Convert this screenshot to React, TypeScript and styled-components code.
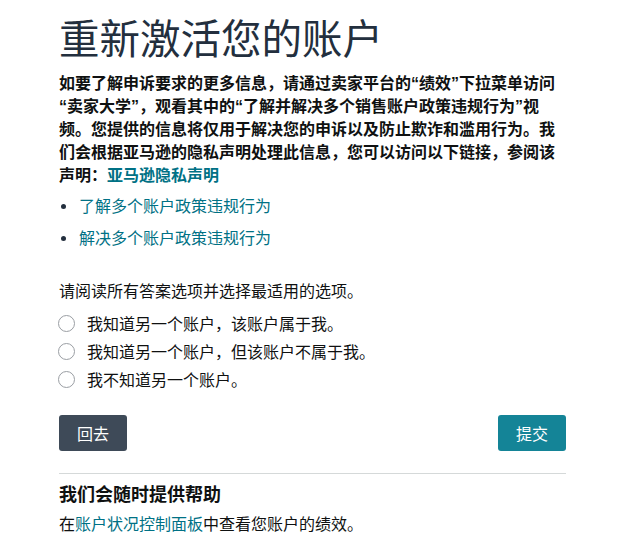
import React, { useState } from 'react'
import styled, { createGlobalStyle } from 'styled-components'

const GlobalStyle = createGlobalStyle`
  body {
    margin: 0;
    background: #ffffff;
    font-family: 'Liberation Sans', 'Noto Sans CJK SC', sans-serif;
    color: #0f1111;
  }
`

const Page = styled.div`
  width: 507px;
  padding: 16px 0 0 59px;
`

const Title = styled.h1`
  margin: 0 0 8px;
  font-size: 40.5px;
  line-height: 48px;
  font-weight: 400;
  color: #232f3e;
`

const Intro = styled.p`
  margin: 0;
  font-size: 16px;
  line-height: 23px;
  font-weight: 700;
`

const Link = styled.a<{ $bold?: boolean }>`
  color: #007185;
  text-decoration: none;
  font-weight: ${(p) => (p.$bold ? 700 : 400)};
  cursor: pointer;
`

const LinkList = styled.ul`
  margin: 8px 0 0;
  padding: 0;
  list-style: none;
  display: flex;
  flex-direction: column;
  gap: 9px;
  font-size: 16px;
  line-height: 23px;
`

const LinkItem = styled.li`
  display: flex;
  align-items: center;
  &::before {
    content: '';
    width: 5px;
    height: 5px;
    margin: 0 13px 0 2px;
    border-radius: 50%;
    background: #232f3e;
    flex: none;
  }
`

const Prompt = styled.p`
  margin: 30px 0 6px;
  font-size: 16px;
  line-height: 23px;
`

const Options = styled.div`
  display: flex;
  flex-direction: column;
`

const OptionRow = styled.label`
  display: flex;
  align-items: center;
  gap: 12px;
  height: 28px;
  font-size: 16px;
  cursor: pointer;
`

const RadioCircle = styled.span<{ $checked: boolean }>`
  width: 17px;
  height: 17px;
  margin-left: -1px;
  box-sizing: border-box;
  border-radius: 50%;
  border: 1px solid #9a9ea3;
  background: #ffffff;
  box-shadow: ${(p) => (p.$checked ? 'inset 0 0 0 4px #007185' : 'none')};
  flex: none;
`

const Actions = styled.div`
  display: flex;
  justify-content: space-between;
  margin-top: 22px;
`

const Button = styled.button<{ $variant: 'back' | 'submit' }>`
  width: 68px;
  height: 36px;
  border: none;
  border-radius: 3px;
  font-family: inherit;
  font-size: 16px;
  color: #ffffff;
  background: ${(p) => (p.$variant === 'back' ? '#3e4a58' : '#148497')};
  cursor: pointer;
`

const Divider = styled.hr`
  margin: 22px 0 0;
  border: none;
  border-top: 1px solid #d5d9d9;
`

const HelpHeading = styled.h3`
  margin: 9px 0 6px;
  font-size: 18px;
  line-height: 24px;
  font-weight: 700;
`

const HelpText = styled.p`
  margin: 0;
  font-size: 16px;
  line-height: 23px;
`

const options = [
  '我知道另一个账户，该账户属于我。',
  '我知道另一个账户，但该账户不属于我。',
  '我不知道另一个账户。',
]

export default function App() {
  const [selected, setSelected] = useState<number | null>(null)

  return (
    <Page>
      <GlobalStyle />
      <Title>重新激活您的账户</Title>
      <Intro>
        如要了解申诉要求的更多信息，请通过卖家平台的“绩效”下拉菜单访问
        <br />
        “卖家大学”，观看其中的“了解并解决多个销售账户政策违规行为”视
        <br />
        频。您提供的信息将仅用于解决您的申诉以及防止欺诈和滥用行为。我们会根据亚马逊的隐私声明处理此信息，您可以访问以下链接，参阅该声明：
        <Link $bold>亚马逊隐私声明</Link>
      </Intro>
      <LinkList>
        <LinkItem>
          <Link>了解多个账户政策违规行为</Link>
        </LinkItem>
        <LinkItem>
          <Link>解决多个账户政策违规行为</Link>
        </LinkItem>
      </LinkList>
      <Prompt>请阅读所有答案选项并选择最适用的选项。</Prompt>
      <Options>
        {options.map((text, i) => (
          <OptionRow key={text} onClick={() => setSelected(i)}>
            <RadioCircle $checked={selected === i} />
            {text}
          </OptionRow>
        ))}
      </Options>
      <Actions>
        <Button $variant="back">回去</Button>
        <Button $variant="submit">提交</Button>
      </Actions>
      <Divider />
      <HelpHeading>我们会随时提供帮助</HelpHeading>
      <HelpText>
        在<Link>账户状况控制面板</Link>中查看您账户的绩效。
      </HelpText>
    </Page>
  )
}
